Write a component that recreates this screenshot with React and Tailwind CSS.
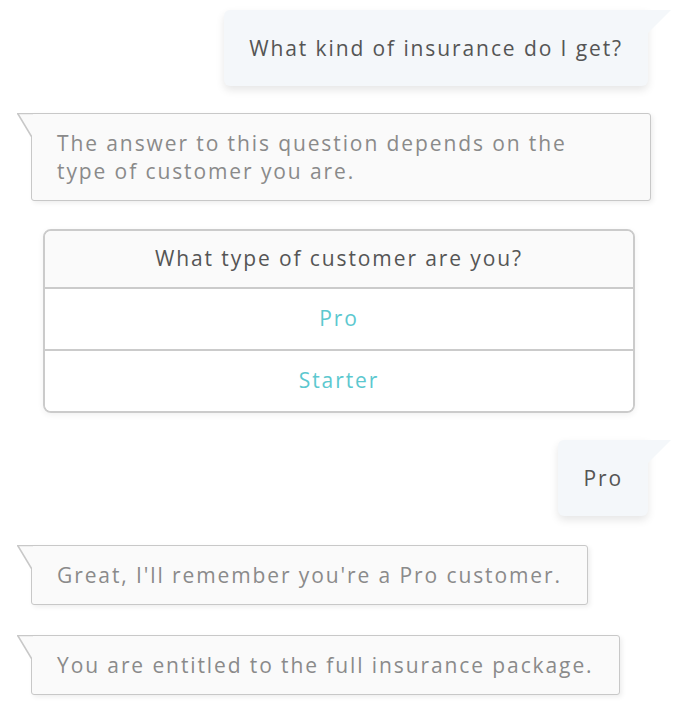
import React from "react";

const font = { fontFamily: '"Open Sans", "Liberation Sans", sans-serif' };

function UserBubble({ children, className = "" }) {
  return (
    <div className={`flex justify-end pr-[34px] ${className}`}>
      <div className="relative rounded-md rounded-tr-none bg-[#f4f7fa] px-[25px] py-[24px] text-[21px] leading-[28px] tracking-[1.9px] text-[#555] shadow-[0_4px_8px_rgba(0,0,0,0.1)]">
        {children}
        <svg
          className="absolute right-[-23px] top-0"
          width="23"
          height="23"
          viewBox="0 0 23 23"
        >
          <polygon points="0,0 23,0 0,23" fill="#f4f7fa" />
        </svg>
      </div>
    </div>
  );
}

function BotBubble({ children, className = "", maxW = "" }) {
  return (
    <div className={`flex justify-start pl-[31px] ${className}`}>
      <div
        className={`relative rounded-[3px] rounded-tl-none border border-[#c8c8c8] bg-[#fafafa] px-[25px] py-[15px] text-[21px] leading-[28px] tracking-[1.9px] text-[#8a8a8a] shadow-[2px_2px_5px_rgba(0,0,0,0.07)] ${maxW}`}
      >
        {children}
        <svg
          className="absolute left-[-15px] top-[-1px]"
          width="16"
          height="25"
          viewBox="0 0 16 25"
        >
          <polygon points="0,0 16,0 16,23 14.5,23" fill="#fafafa" />
          <line x1="0" y1="0.5" x2="16" y2="0.5" stroke="#c8c8c8" strokeWidth="1.5" />
          <line x1="0.7" y1="0.5" x2="14.5" y2="23.5" stroke="#c8c8c8" strokeWidth="1.5" />
        </svg>
      </div>
    </div>
  );
}

export default function App() {
  return (
    <div className="min-h-[710px] w-[682px] bg-white pt-[10px]" style={font}>
      <UserBubble>What kind of insurance do I get?</UserBubble>

      <BotBubble className="mt-[27px]" maxW="w-[620px]">
        The answer to this question depends on the
        <br />
        type of customer you are.
      </BotBubble>

      <div className="mt-[28px] px-[43px] pr-[47px]">
        <div className="overflow-hidden rounded-lg border-2 border-[#cbcbcb] text-center text-[21px] tracking-[1.9px] shadow-[0_2px_6px_rgba(0,0,0,0.06)]">
          <div className="flex h-[56px] items-center justify-center bg-[#fafafa] text-[#555]">
            What type of customer are you?
          </div>
          <div className="flex h-[62px] items-center justify-center border-t-2 border-[#cbcbcb] bg-white text-[#5cc8cf]">
            Pro
          </div>
          <div className="flex h-[62px] items-center justify-center border-t-2 border-[#cbcbcb] bg-white text-[#5cc8cf]">
            Starter
          </div>
        </div>
      </div>

      <UserBubble className="mt-[27px]">Pro</UserBubble>

      <BotBubble className="mt-[29px]">
        Great, I'll remember you're a Pro customer.
      </BotBubble>

      <BotBubble className="mt-[30px]">
        You are entitled to the full insurance package.
      </BotBubble>
    </div>
  );
}
